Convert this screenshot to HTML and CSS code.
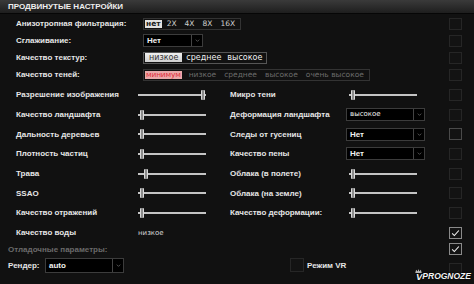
FILE: index.html
```html
<!DOCTYPE html>
<html lang="ru">
<head>
  <meta charset="UTF-8">
  <title>Продвинутые настройки</title>
  <link rel="stylesheet" href="styles.css">
</head>
<body>
  <div class="panel">
    <div class="title-bar">ПРОДВИНУТЫЕ НАСТРОЙКИ</div>

    <div class="top-rows">
      <div class="wide">
        <span class="label">Анизотропная фильтрация:</span>
        <div class="seg seg-af">
          <span class="on">нет</span><span>2X</span><span>4X</span><span>8X</span><span>16X</span>
        </div>
        <span class="box"></span>
      </div>
      <div class="wide">
        <span class="label">Сглаживание:</span>
        <div class="select sel-aa"><span class="val">Нет</span><span class="arrow"><svg viewBox="0 0 8 8"><path d="M2 3l2 2 2-2" /></svg></span></div>
        <span class="box"></span>
      </div>
      <div class="wide">
        <span class="label">Качество текстур:</span>
        <div class="seg seg-tex">
          <span class="on">низкое</span><span>среднее</span><span>высокое</span>
        </div>
        <span class="box"></span>
      </div>
      <div class="wide">
        <span class="label">Качество теней:</span>
        <div class="seg seg-shadow">
          <span class="on">минимум</span><span>низкое</span><span>среднее</span><span>высокое</span><span>очень высокое</span>
        </div>
        <span class="box"></span>
      </div>
    </div>

    <div class="rows">
      <div class="row">
        <span class="label">Разрешение изображения</span>
        <div class="slider"><i class="thumb" style="left: 63px"></i></div>
        <span class="label">Микро тени</span>
        <div class="slider right"><i class="thumb" style="left: 2px"></i></div>
        <span class="box"></span>
      </div>
      <div class="row">
        <span class="label">Качество ландшафта</span>
        <div class="slider"><i class="thumb" style="left: 2px"></i></div>
        <span class="label">Деформация ландшафта</span>
        <div class="select sel-r"><span class="val small">высокое</span><span class="arrow"><svg viewBox="0 0 8 8"><path d="M2 3l2 2 2-2" /></svg></span></div>
        <span class="box"></span>
      </div>
      <div class="row">
        <span class="label">Дальность деревьев</span>
        <div class="slider"><i class="thumb" style="left: 2px"></i></div>
        <span class="label">Следы от гусениц</span>
        <div class="select sel-r"><span class="val">Нет</span><span class="arrow"><svg viewBox="0 0 8 8"><path d="M2 3l2 2 2-2" /></svg></span></div>
        <span class="box lit"></span>
      </div>
      <div class="row">
        <span class="label">Плотность частиц</span>
        <div class="slider"><i class="thumb" style="left: 2px"></i></div>
        <span class="label">Качество пены</span>
        <div class="select sel-r"><span class="val">Нет</span><span class="arrow"><svg viewBox="0 0 8 8"><path d="M2 3l2 2 2-2" /></svg></span></div>
        <span class="box"></span>
      </div>
      <div class="row">
        <span class="label">Трава</span>
        <div class="slider"><i class="thumb" style="left: 6px"></i></div>
        <span class="label">Облака (в полете)</span>
        <div class="slider right"><i class="thumb" style="left: 2px"></i></div>
        <span class="box"></span>
      </div>
      <div class="row">
        <span class="label">SSAO</span>
        <div class="slider"><i class="thumb" style="left: 2px"></i></div>
        <span class="label">Облака (на земле)</span>
        <div class="slider right"><i class="thumb" style="left: 2px"></i></div>
        <span class="box"></span>
      </div>
      <div class="row">
        <span class="label">Качество отражений</span>
        <div class="slider"><i class="thumb" style="left: 2px"></i></div>
        <span class="label">Качество деформации:</span>
        <div class="slider right"><i class="thumb" style="left: 2px"></i></div>
        <span class="box"></span>
      </div>
      <div class="row">
        <span class="label">Качество воды</span>
        <span class="plain">низкое</span>
        <span></span>
        <span></span>
        <span class="box on"><svg viewBox="0 0 12 12"><path d="M2 6.5l2.6 2.6L10 3" /></svg></span>
      </div>
    </div>

    <div class="debug">
      <span class="label dim">Отладочные параметры:</span>
      <span class="box on"><svg viewBox="0 0 12 12"><path d="M2 6.5l2.6 2.6L10 3" /></svg></span>
    </div>

    <div class="render">
      <span class="label">Рендер:</span>
      <div class="select sel-render"><span class="val">auto</span><span class="arrow"><svg viewBox="0 0 8 8"><path d="M2 3l2 2 2-2" /></svg></span></div>
      <div class="vr"><span class="box big"></span><span class="label">Режим VR</span></div>
      <span class="box"></span>
    </div>

    <div class="watermark">
      <svg class="wm-icon" viewBox="0 0 8 5"><path d="M0 5L1 1l2 2 1-3 1 3 2-2 1 4z" /></svg>
      <span class="wm-v">V</span>PROGNOZE
    </div>
  </div>
</body>
</html>
```

FILE: styles.css
```css
* { box-sizing: border-box; }
body {
  margin: 0;
  background-color: #0f0f0f;
  font-family: 'Liberation Sans', Arial, sans-serif;
  overflow: hidden;
}
.panel {
  position: relative;
  width: 474px;
  height: 284px;
  background: #111111;
}
.title-bar {
  height: 14px;
  padding-left: 8px;
  background: linear-gradient(#3a3a3a, #1e1e1e);
  border-bottom: 1px solid #060606;
  color: #eeeeee;
  font-size: 8px;
  font-weight: bold;
  line-height: 14px;
}
.label {
  color: #e6e6e6;
  font-size: 8px;
  font-weight: bold;
  white-space: nowrap;
}
.label.dim {
  color: #6a6a6a;
}
.top-rows {
  padding-top: 1px;
}
.wide {
  display: grid;
  grid-template-columns: 127px 1fr 13px;
  align-items: center;
  height: 17px;
  padding: 0 12px 0 16px;
}
.seg {
  justify-self: start;
  display: flex;
  align-items: center;
  height: 12px;
  padding: 1px;
  border: 1px solid #333333;
}
.seg span {
  padding: 0 4px;
  font-family: 'DejaVu Sans', sans-serif;
  font-size: 7.5px;
  line-height: 8px;
  color: #cfcfcf;
  white-space: nowrap;
}
.seg span.on {
  background: #e2e2e2;
  color: #1a1a1a;
}
.seg-af span { padding: 0 4px; }
.seg-af span.on { font-weight: bold; padding: 0 1px; margin-right: 1px; }
.seg-tex { border-color: #555555; }
.seg-tex span {
  color: #f0f0f0;
  padding: 0 3px;
  font-size: 8px;
  line-height: 9px;
}
.seg-tex span.on {
  color: #333;
  padding: 0 4px;
  margin-right: 1px;
  background: linear-gradient(#f0f0f0, #cfcfcf);
}
.seg-shadow span { color: #6c6c6c; padding: 0 4px; }
.seg-shadow span.on {
  background: #e9a9aa;
  color: #e0303a;
  padding: 0 1px;
  margin-right: 3px;
  letter-spacing: -0.2px;
}
.select {
  display: flex;
  align-items: stretch;
  height: 13px;
  background: #000000;
  border: 1px solid #3c3c3c;
}
.select .val {
  flex: 1;
  padding-left: 3px;
  color: #f2f2f2;
  font-size: 8px;
  font-weight: bold;
  line-height: 11px;
}
.select .val.small {
  font-size: 7px;
  font-weight: normal;
  font-family: 'DejaVu Sans', sans-serif;
}
.select .arrow {
  width: 11px;
  border-left: 1px solid #444444;
  display: flex;
  align-items: center;
  justify-content: center;
}
.select svg {
  width: 7px;
  height: 7px;
  fill: none;
  stroke: #5a5a5a;
  stroke-width: 1;
}
.sel-aa { width: 60px; }
.sel-r { width: 79px; }
.sel-render { width: 79px; height: 15px; }
.sel-render .val { line-height: 13px; }
.rows {
  padding-top: 2px;
}
.row {
  display: grid;
  grid-template-columns: 122px 92px 116px 103px 13px;
  align-items: center;
  height: 19.7px;
  padding-left: 16px;
}
.slider {
  position: relative;
  width: 68px;
  height: 10px;
}
.slider::before {
  content: "";
  position: absolute;
  left: 0;
  right: 0;
  top: 4px;
  height: 2px;
  background: #c4c4c4;
}
.slider.right {
  margin-left: 3px;
}
.thumb {
  position: absolute;
  top: 0;
  width: 4px;
  height: 10px;
  background: linear-gradient(90deg, #d8d8d8 0 1px, #8a8a8a 1px 3px, #d8d8d8 3px);
  border-radius: 1px;
}
.plain {
  color: #d8d8d8;
  font-family: 'DejaVu Sans', sans-serif;
  font-size: 7px;
}
.box {
  display: block;
  width: 13px;
  height: 12px;
  border: 1px solid #262626;
  background: #131313;
}
.box.lit {
  border-color: #4a4a4a;
}
.box.on {
  border-color: #8a8a8a;
}
.box.on svg {
  display: block;
  width: 11px;
  height: 10px;
  fill: none;
  stroke: #f4f4f4;
  stroke-width: 1.3;
}
.box.big {
  width: 14px;
  height: 14px;
}
.debug {
  display: grid;
  grid-template-columns: 1fr 13px;
  align-items: center;
  height: 13px;
  padding: 0 12px 0 8px;
}
.render {
  display: grid;
  grid-template-columns: 37px 245px 159px 13px;
  align-items: center;
  height: 19px;
  padding-left: 8px;
}
.render > .box {
  align-self: end;
}
.vr {
  display: flex;
  align-items: center;
  gap: 3px;
}
.watermark {
  position: absolute;
  right: 3px;
  bottom: 3px;
  display: flex;
  align-items: flex-end;
  color: #f4f4f4;
  font-size: 8.5px;
  font-weight: bold;
  font-style: italic;
  line-height: 9px;
  text-shadow: 0 0 2px #000, 0 0 1px #000;
}
.wm-icon {
  align-self: flex-start;
  width: 7px;
  height: 4px;
  margin: -3px -6px 0 1px;
  fill: #bbbbbb;
}
.wm-v {
  font-size: 9.5px;
}
```
